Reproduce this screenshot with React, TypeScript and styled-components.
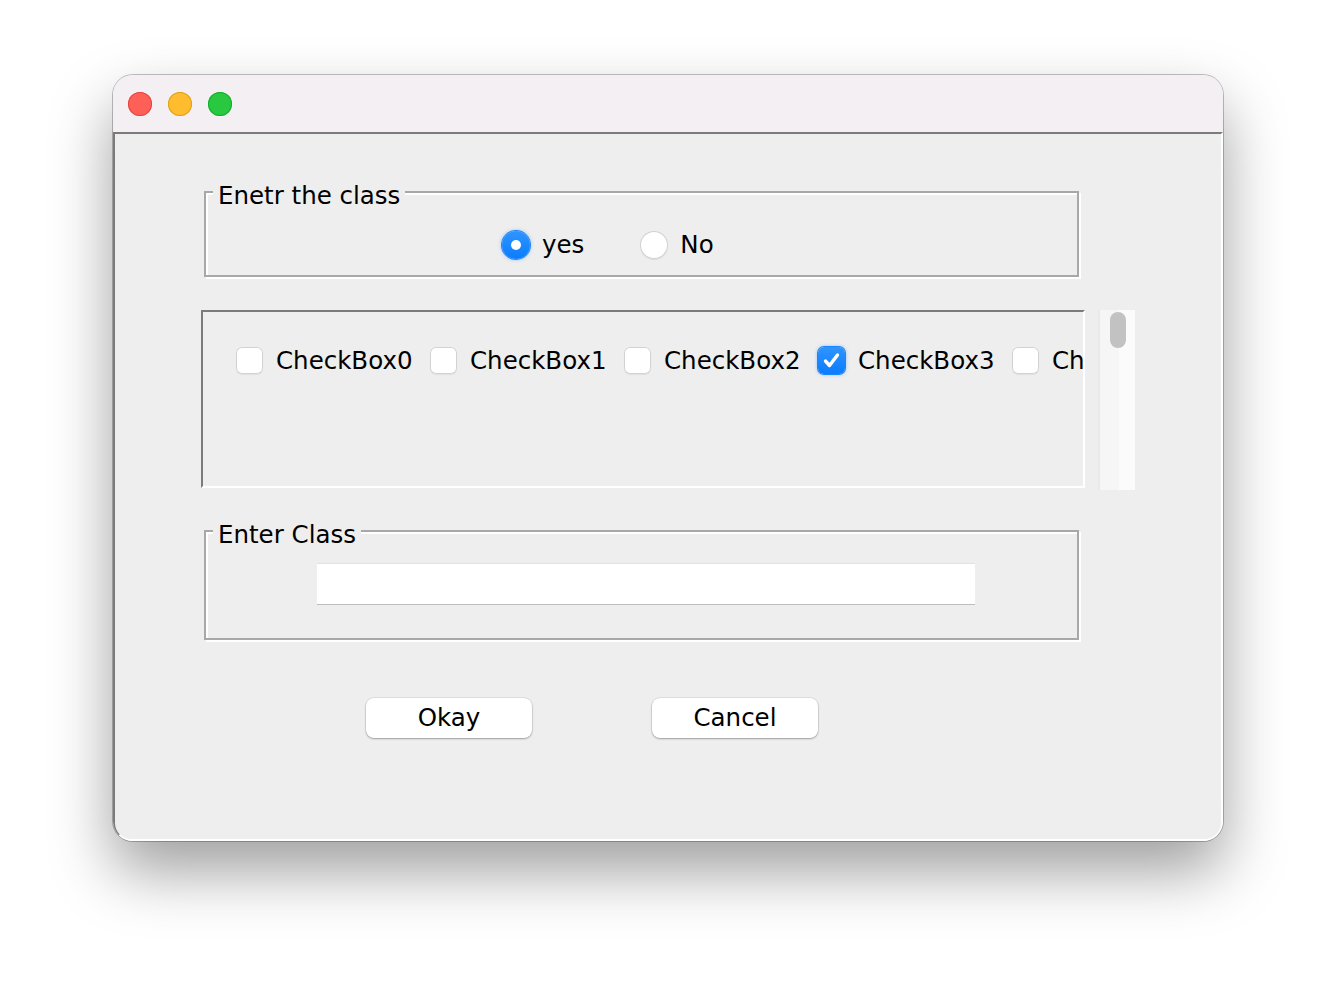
import React from 'react'
import styled, {createGlobalStyle} from 'styled-components'

const GlobalStyle = createGlobalStyle`
  html, body {
    margin: 0;
    padding: 0;
    background: #ffffff;
  }
  body {
    font-family: "DejaVu Sans", "Noto Sans", sans-serif;
    color: #000;
  }
`

const Page = styled.div`
  width: 1336px;
  height: 990px;
  padding: 75px 0 0 113px;
  box-sizing: border-box;
  overflow: hidden;
`

const Window = styled.div`
  width: 1110px;
  display: flex;
  flex-direction: column;
  border-radius: 20px;
  overflow: hidden;
  background: #eeeeee;
  box-shadow: 0 30px 62px rgba(0, 0, 0, 0.38), 0 0 0 1px rgba(0, 0, 0, 0.24);
`

const TitleBar = styled.div`
  height: 57px;
  flex-shrink: 0;
  display: flex;
  align-items: center;
  gap: 16px;
  padding-left: 15px;
  background: #f3eff3;
`

const Light = styled.span<{color: string; edge: string}>`
  width: 24px;
  height: 24px;
  border-radius: 50%;
  background: ${({color}) => color};
  box-shadow: inset 0 0 0 1px ${({edge}) => edge};
`

const Content = styled.div`
  height: 709px;
  box-sizing: border-box;
  border-top: 2px solid #7b7b7b;
  border-left: 2px solid #7b7b7b;
  border-right: 2px solid #ffffff;
  border-bottom: 2px solid #ffffff;
  border-bottom-left-radius: 18px;
  border-bottom-right-radius: 18px;
  padding: 41px 0 0 89px;
  display: flex;
  flex-direction: column;
  align-items: flex-start;
  font-size: 24.5px;
`

const Group = styled.fieldset`
  width: 875px;
  box-sizing: border-box;
  margin: 0;
  padding: 0;
  min-width: 0;
  border: 2px solid #a8a8a8;
  box-shadow: 2px 2px 0 #ffffff, inset 2px 2px 0 #ffffff;
`

const Legend = styled.legend`
  margin-left: 7px;
  padding: 7px 5px 0;
  line-height: 27px;
  background: #eeeeee;
`

const RadioRow = styled.div`
  height: 28px;
  margin: 22px 0 16px;
  padding-left: 296px;
  display: flex;
  align-items: center;
  gap: 56px;
`

const Choice = styled.label`
  display: flex;
  align-items: center;
  gap: 12px;
  line-height: 28px;
`

const RadioDot = styled.span<{on?: boolean}>`
  width: 28px;
  height: 28px;
  box-sizing: border-box;
  border-radius: 50%;
  display: flex;
  align-items: center;
  justify-content: center;
  background: ${({on}) => (on ? 'linear-gradient(#2f95ff, #0a7cff)' : '#ffffff')};
  box-shadow: ${({on}) =>
    on
      ? '0 0 0 1px #1f86f5, 0 0 4px rgba(10,124,255,0.55)'
      : 'inset 0 0 0 1px #cfcfcf, 0 1px 1px rgba(0,0,0,0.08)'};

  &::after {
    content: '';
    display: ${({on}) => (on ? 'block' : 'none')};
    width: 10px;
    height: 10px;
    border-radius: 50%;
    background: #ffffff;
  }
`

const ScrollRow = styled.div`
  margin: 33px 0 0 -3px;
  display: flex;
  align-items: flex-start;
  gap: 13px;
`

const Pane = styled.div`
  width: 884px;
  height: 178px;
  box-sizing: border-box;
  border-top: 2px solid #7b7b7b;
  border-left: 2px solid #7b7b7b;
  border-right: 2px solid #ffffff;
  border-bottom: 2px solid #ffffff;
  overflow: hidden;
  padding: 34px 0 0 33px;
  display: flex;
  align-items: flex-start;
`

const Item = styled.label`
  width: 194px;
  flex-shrink: 0;
  display: flex;
  align-items: center;
  gap: 13px;
  line-height: 29px;
  white-space: nowrap;
`

const Box = styled.span<{on?: boolean}>`
  width: 27px;
  height: 27px;
  flex-shrink: 0;
  box-sizing: border-box;
  border-radius: 6px;
  display: flex;
  align-items: center;
  justify-content: center;
  background: ${({on}) => (on ? 'linear-gradient(#2f95ff, #0a7cff)' : '#ffffff')};
  box-shadow: ${({on}) =>
    on
      ? '0 0 0 1px #1f86f5, 0 0 4px rgba(10,124,255,0.55)'
      : 'inset 0 0 0 1px #d2d2d2, 0 1px 1px rgba(0,0,0,0.06)'};
`

const Track = styled.div`
  width: 37px;
  height: 180px;
  box-sizing: border-box;
  border-left: 2px solid #e9e9e9;
  background: linear-gradient(90deg, #f6f6f6 0%, #f6f6f6 55%, #fbfbfb 55%);
  padding: 2px 0 0 10px;
`

const Thumb = styled.div`
  width: 16px;
  height: 36px;
  border-radius: 8px;
  background: #c2c2c2;
`

const ClassGroup = styled(Group)`
  margin-top: 24px;
`

const Field = styled.input`
  display: block;
  width: 658px;
  height: 42px;
  box-sizing: border-box;
  margin: 15px 0 33px 111px;
  border: none;
  border-top: 1px solid #e2e2e2;
  border-bottom: 1px solid #bdbdbd;
  background: #ffffff;
  font: inherit;
  outline: none;
`

const Buttons = styled.div`
  margin: 58px 0 0 162px;
  display: flex;
  gap: 120px;
`

const Button = styled.button`
  width: 166px;
  height: 40px;
  border: none;
  border-radius: 8px;
  background: #ffffff;
  box-shadow: 0 1px 2px rgba(0, 0, 0, 0.3), 0 0 0 0.5px rgba(0, 0, 0, 0.12);
  font: inherit;
  color: #000;
  padding: 0;
  line-height: 38px;
`

function Check() {
  return (
    <svg width="19" height="19" viewBox="0 0 19 19">
      <path
        d="M3.5 10 L7.5 14.5 L15.5 4"
        fill="none"
        stroke="#ffffff"
        strokeWidth="3.4"
        strokeLinecap="round"
        strokeLinejoin="round"
      />
    </svg>
  )
}

const boxes = [0, 1, 2, 3, 4]

export default function App() {
  return (
    <Page>
      <GlobalStyle />
      <Window>
        <TitleBar>
          <Light color="#fe5f57" edge="#e2463f" />
          <Light color="#febc2e" edge="#e1a116" />
          <Light color="#28c840" edge="#14ae2a" />
        </TitleBar>
        <Content>
          <Group>
            <Legend>Enetr the class</Legend>
            <RadioRow>
              <Choice>
                <RadioDot on />
                yes
              </Choice>
              <Choice>
                <RadioDot />
                No
              </Choice>
            </RadioRow>
          </Group>

          <ScrollRow>
            <Pane>
              {boxes.map((n) => (
                <Item key={n}>
                  <Box on={n === 3}>{n === 3 && <Check />}</Box>
                  CheckBox{n}
                </Item>
              ))}
            </Pane>
            <Track>
              <Thumb />
            </Track>
          </ScrollRow>

          <ClassGroup>
            <Legend>Enter Class</Legend>
            <Field type="text" />
          </ClassGroup>

          <Buttons>
            <Button>Okay</Button>
            <Button>Cancel</Button>
          </Buttons>
        </Content>
      </Window>
    </Page>
  )
}
